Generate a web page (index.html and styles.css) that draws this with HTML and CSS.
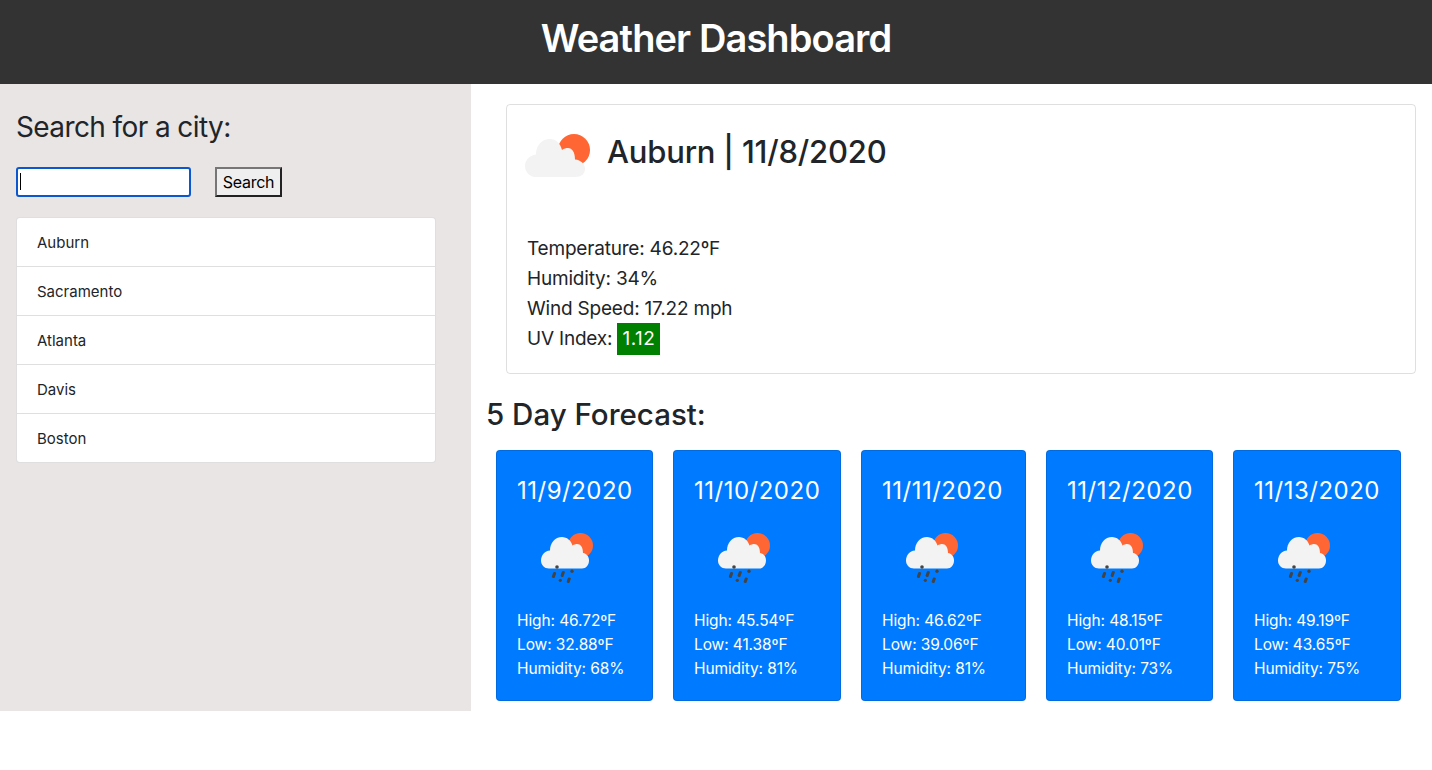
FILE: index.html
```html
<!DOCTYPE html>
<html lang="en">
<head>
  <meta charset="UTF-8" />
  <title>Weather Dashboard</title>
  <link rel="stylesheet" href="styles.css">
</head>
<body>

  <svg class="defs" width="0" height="0">
    <symbol id="cloud-sun" viewBox="0 0 66 48">
      <circle cx="49" cy="21" r="16" fill="#ff6633"/>
      <path transform="translate(0 10)" d="M11 38C4.500 38 0 33 0 27C0 21 5 16 11 15.500C11 6 17 0 25 0C31 0 35 4 37 11C39 9.500 41 9 43 9C47 9 50 13 50 20.500C56 21 60 25 60 30C60 35 56 38 50 38Z" fill="#f3f3f3"/>
    </symbol>
    <symbol id="cloud-rain" viewBox="0 0 54 50">
      <circle cx="39.500" cy="12.500" r="12.500" fill="#ff6633"/>
      <path d="M8 35.500C3.500 35.500 0 32 0 27.500C0 22.500 3.500 18 9 17.500C9 10 14 4 21 4C26 4 30 7.500 31.500 12.500C33 11.500 35 11 36 11C39.500 11 42 14 42 20C46 20.500 48 24 48 27.500C48 32 45 35.500 41 35.500Z" fill="#f3f3f3"/>
      <g fill="#444444">
        <circle cx="16" cy="34" r="1.800"/>
        <rect x="11.500" y="39" width="3" height="6" rx="1" transform="rotate(20 13 42)"/>
        <rect x="20.200" y="38" width="3" height="6" rx="1" transform="rotate(20 21.700 41)"/>
        <circle cx="31" cy="38.300" r="1.700"/>
        <circle cx="19.300" cy="47.300" r="1.600"/>
        <rect x="26.200" y="44.500" width="3" height="5.500" rx="1" transform="rotate(20 27.700 47.300)"/>
      </g>
    </symbol>
  </svg>

  <header class="top-bar">
    <h1>Weather Dashboard</h1>
  </header>

  <div class="page">
    <aside class="sidebar">
      <h2 class="search-title">Search for a city:</h2>
      <form class="search-form">
        <div class="input-wrap">
          <input type="text" class="city-input" />
          <span class="caret"></span>
        </div>
        <button type="button" class="search-btn">Search</button>
      </form>
      <ul class="city-list">
        <li>Auburn</li>
        <li>Sacramento</li>
        <li>Atlanta</li>
        <li>Davis</li>
        <li>Boston</li>
      </ul>
    </aside>

    <main class="content">
      <section class="current">
        <div class="current-head">
          <svg class="current-icon"><use href="#cloud-sun"/></svg>
          <h2>Auburn | 11/8/2020</h2>
        </div>
        <p>Temperature: 46.22ºF</p>
        <p>Humidity: 34%</p>
        <p>Wind Speed: 17.22 mph</p>
        <p>UV Index: <span class="uv">1.12</span></p>
      </section>

      <h2 class="forecast-title">5 Day Forecast:</h2>
      <div class="forecast">
        <div class="day">
          <h3>11/9/2020</h3>
          <svg class="day-icon"><use href="#cloud-rain"/></svg>
          <p>High: 46.72ºF</p>
          <p>Low: 32.88ºF</p>
          <p>Humidity: 68%</p>
        </div>
        <div class="day">
          <h3>11/10/2020</h3>
          <svg class="day-icon"><use href="#cloud-rain"/></svg>
          <p>High: 45.54ºF</p>
          <p>Low: 41.38ºF</p>
          <p>Humidity: 81%</p>
        </div>
        <div class="day">
          <h3>11/11/2020</h3>
          <svg class="day-icon"><use href="#cloud-rain"/></svg>
          <p>High: 46.62ºF</p>
          <p>Low: 39.06ºF</p>
          <p>Humidity: 81%</p>
        </div>
        <div class="day">
          <h3>11/12/2020</h3>
          <svg class="day-icon"><use href="#cloud-rain"/></svg>
          <p>High: 48.15ºF</p>
          <p>Low: 40.01ºF</p>
          <p>Humidity: 73%</p>
        </div>
        <div class="day">
          <h3>11/13/2020</h3>
          <svg class="day-icon"><use href="#cloud-rain"/></svg>
          <p>High: 49.19ºF</p>
          <p>Low: 43.65ºF</p>
          <p>Humidity: 75%</p>
        </div>
      </div>
    </main>
  </div>

</body>
</html>
```

FILE: styles.css
```css
* {
  box-sizing: border-box;
}

body {
  margin: 0;
  font-family: 'Inter', 'Liberation Sans', sans-serif;
  font-size: 16px;
  color: #212529;
  background-color: #ffffff;
}

.defs {
  display: block;
  height: 0;
}

h1, h2, h3, p, ul {
  margin: 0;
  padding: 0;
}

h1, h2 {
  font-weight: 500;
}

.top-bar {
  height: 84px;
  padding-bottom: 8px;
  background-color: #333333;
  color: #ffffff;
  display: flex;
  align-items: center;
  justify-content: center;
}

.top-bar h1 {
  font-size: 38px;
  font-weight: 600;
  letter-spacing: -0.9px;
}

.page {
  display: flex;
  height: 627px;
}

.sidebar {
  width: 471px;
  background-color: #e9e5e4;
  padding: 24px 35px 0 16px;
}

.search-title {
  font-size: 28px;
  line-height: 39px;
  font-weight: 400;
  letter-spacing: -0.6px;
}

.search-form {
  display: flex;
  gap: 24px;
  margin-top: 20px;
}

.input-wrap {
  position: relative;
  height: 30px;
}

.city-input {
  display: block;
  width: 175px;
  height: 30px;
  background-color: #ffffff;
  border: 2px solid #0a57d0;
  border-radius: 3px;
  outline: none;
}

.caret {
  position: absolute;
  left: 4px;
  top: 6px;
  width: 1px;
  height: 17px;
  background-color: #000000;
}

.search-btn {
  width: 67px;
  height: 30px;
  padding: 0;
  font-family: inherit;
  font-size: 16px;
  letter-spacing: -0.3px;
  color: #000000;
  background-color: #efefef;
  border: 2px solid;
  border-color: #767676 #222222 #222222 #767676;
}

.city-list {
  list-style: none;
  margin-top: 20px;
  background-color: #ffffff;
  border: 1px solid rgba(0,0,0,0.125);
  border-radius: 4px;
}

.city-list li {
  height: 49px;
  padding-left: 20px;
  line-height: 50px;
  font-size: 15px;
  border-bottom: 1px solid rgba(0,0,0,0.125);
}

.city-list li:last-child {
  height: 48px;
  border-bottom: none;
}

.content {
  flex: 1;
  padding: 20px 16px 0;
}

.current {
  height: 270px;
  margin: 0 0 0 19px;
  padding: 24px 20px 0;
  border: 1px solid rgba(0,0,0,0.125);
  border-radius: 4px;
}

.current-head {
  display: flex;
  align-items: flex-start;
  gap: 16px;
  margin-left: -2px;
  margin-bottom: 57px;
}

.current-icon {
  width: 66px;
  height: 48px;
}

.current-head h2 {
  font-size: 31px;
  line-height: 46px;
  letter-spacing: -0.2px;
}

.current p {
  font-size: 19px;
  line-height: 30px;
  letter-spacing: -0.2px;
}

.uv {
  display: inline-block;
  margin: -1px 0;
  padding: 0 5px;
  line-height: 32px;
  letter-spacing: 0.5px;
  color: #ffffff;
  background-color: #008000;
}

.forecast-title {
  margin-top: 20px;
  margin-left: -1px;
  font-size: 29.5px;
  line-height: 40px;
}

.forecast {
  display: grid;
  grid-template-columns: 157px 168px 165px 167px 168px;
  gap: 20px;
  margin-top: 16px;
  margin-left: 9px;
}

.day {
  height: 251px;
  padding: 24px 20px 0;
  color: #ffffff;
  background-color: #007bff;
  border: 1px solid rgba(0,0,0,0.125);
  border-radius: 4px;
}

.day h3 {
  font-size: 24px;
  line-height: 32px;
  font-weight: 400;
  letter-spacing: 0.5px;
  white-space: nowrap;
}

.day-icon {
  display: block;
  width: 54px;
  height: 50px;
  margin: 26px 0 26px 24px;
}

.day p {
  font-size: 15.5px;
  line-height: 24px;
  letter-spacing: -0.1px;
  white-space: nowrap;
}
```
